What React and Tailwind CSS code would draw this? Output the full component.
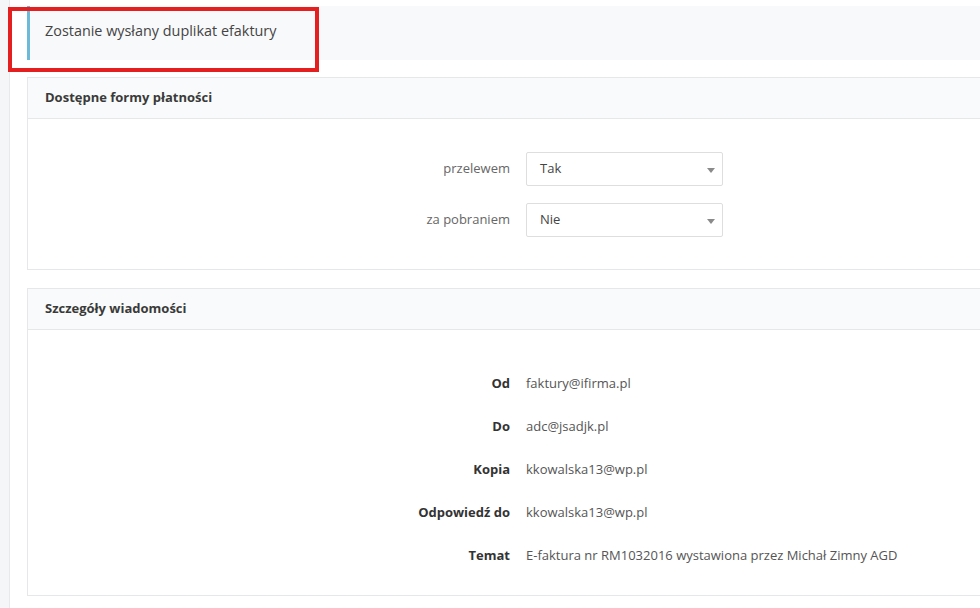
import React from 'react';

const payments = [
  { label: 'przelewem', value: 'Tak' },
  { label: 'za pobraniem', value: 'Nie' },
];

const details = [
  { label: 'Od', value: 'faktury@ifirma.pl' },
  { label: 'Do', value: 'adc@jsadjk.pl' },
  { label: 'Kopia', value: 'kkowalska13@wp.pl' },
  { label: 'Odpowiedź do', value: 'kkowalska13@wp.pl' },
  { label: 'Temat', value: 'E-faktura nr RM1032016 wystawiona przez Michał Zimny AGD' },
];

const Panel = ({ title, children, className }) => (
  <div className={'border border-[#e6e7e9] bg-white ' + className}>
    <div className="flex h-[41px] items-center border-b border-[#e6e7e9] bg-[#f9fafb] pl-[17px] font-bold text-[#3a3a3a]">
      {title}
    </div>
    {children}
  </div>
);

const App = () => {
  return (
    <div
      className="relative flex h-[608px] w-[980px] overflow-hidden bg-white text-[13px] text-[#333]"
      style={{ fontFamily: '"Open Sans", "Noto Sans", sans-serif' }}
    >
      {/* left strip */}
      <div className="w-[10px] shrink-0 border-r border-[#e8e9eb] bg-[#f5f6f8]" />

      <div className="ml-[17px] w-[1000px] shrink-0 pt-[6px]">
        {/* info alert */}
        <div className="h-[54px] border-l-[3px] border-[#6db9d8] bg-[#f8f9fb] pl-[15px] pt-[14px] text-[14.4px] text-[#444]">
          Zostanie wysłany duplikat efaktury
        </div>

        {/* payment forms */}
        <Panel title="Dostępne formy płatności" className="mt-[17px]">
          <div className="flex flex-col gap-[17px] pb-[32px] pt-[33px]">
            {payments.map((row) => (
              <div key={row.label} className="flex items-center">
                <div className="w-[482px] text-right text-[#666]">{row.label}</div>
                <div className="ml-[16px] flex h-[34px] w-[197px] items-center justify-between rounded-[2px] border border-[#dedede] pl-[13px] pr-[7px] text-[#444]">
                  <span>{row.value}</span>
                  <span className="mt-[2px] h-0 w-0 border-x-4 border-t-[5px] border-x-transparent border-t-[#8a8a8a]" />
                </div>
              </div>
            ))}
          </div>
        </Panel>

        {/* message details */}
        <Panel title="Szczegóły wiadomości" className="mt-[18px]">
          <div className="flex flex-col pb-[18px] pt-[32px]">
            {details.map((row) => (
              <div key={row.label} className="flex h-[43px] items-center">
                <div className="w-[482px] text-right font-bold text-[#333]">{row.label}</div>
                <div className="ml-[16px] text-[#555]">{row.value}</div>
              </div>
            ))}
          </div>
        </Panel>
      </div>

      {/* red highlight frame */}
      <div className="absolute left-[8px] top-[7px] h-[65px] w-[311px] border-4 border-[#e3201f]" />
    </div>
  );
};

export default App;
